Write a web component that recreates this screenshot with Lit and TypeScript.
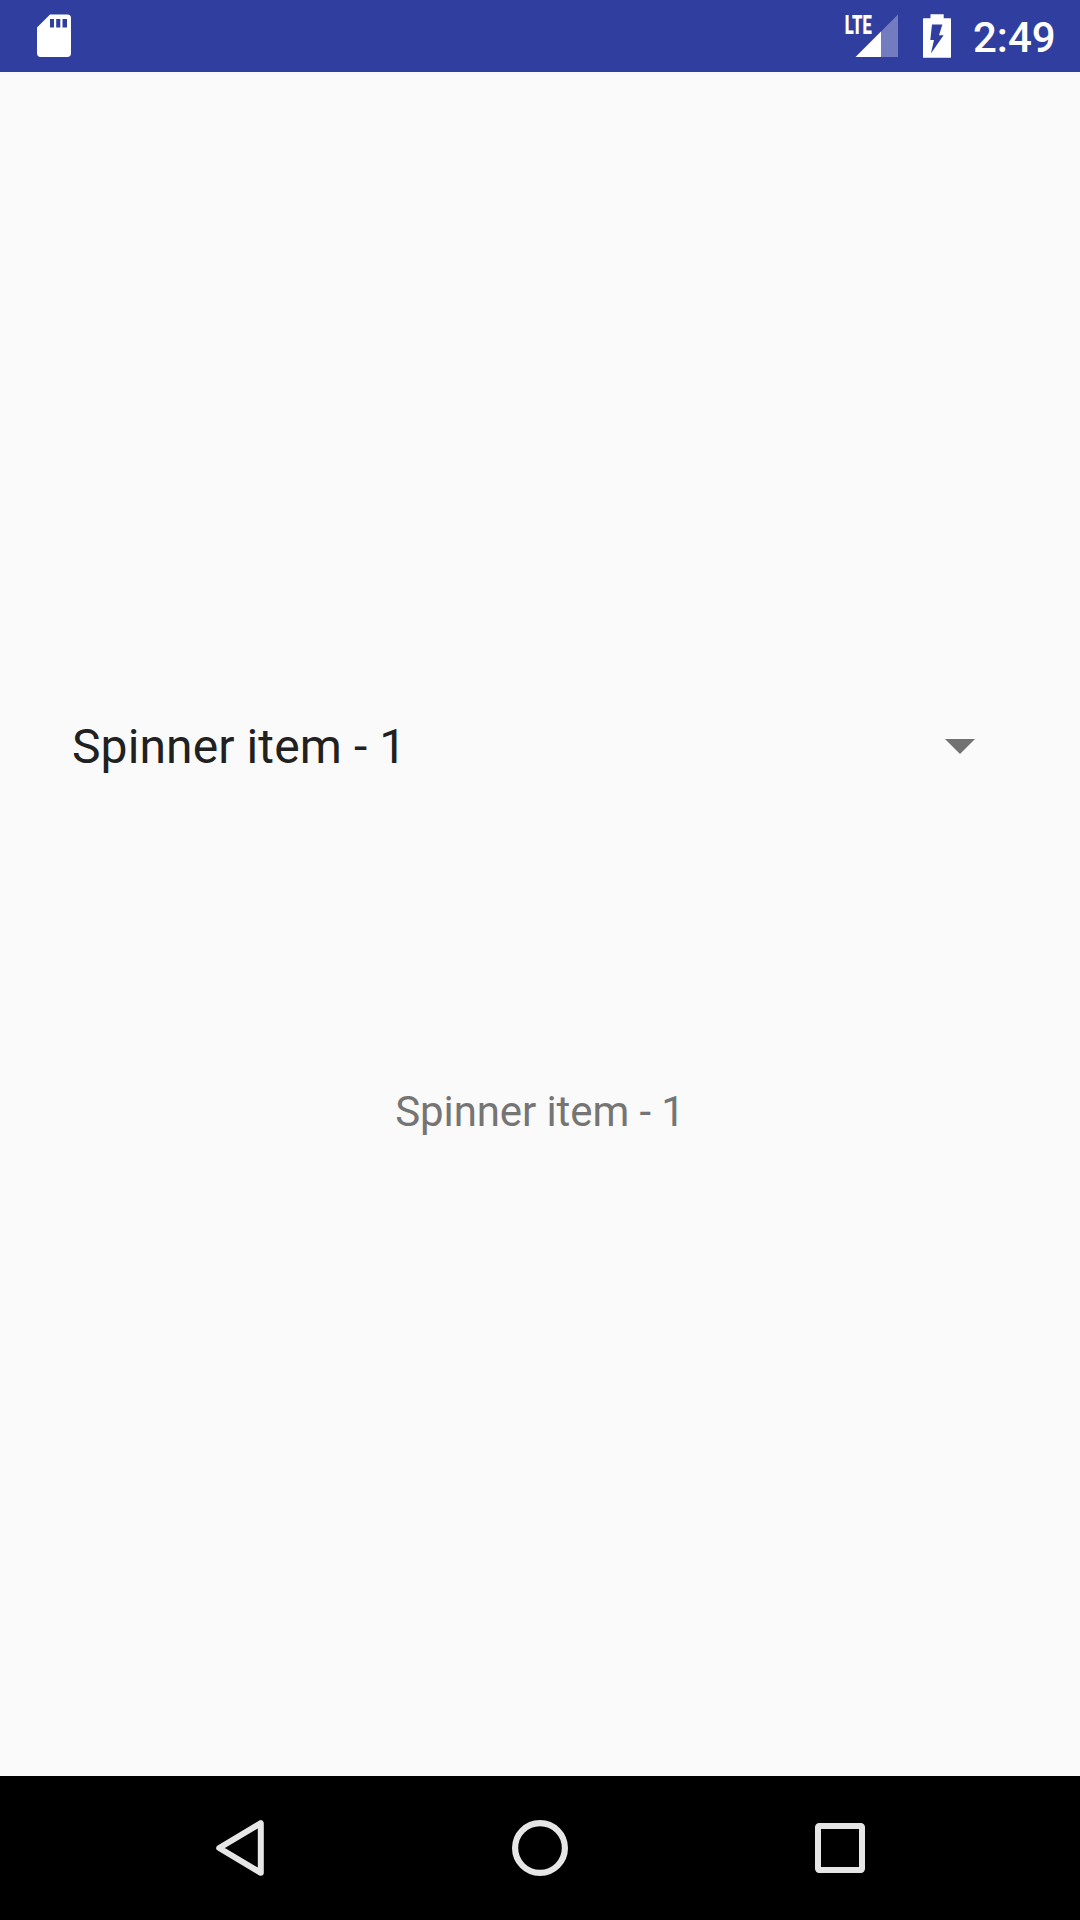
import { LitElement, html, css } from "lit";
import { customElement, state } from "lit/decorators.js";

@customElement("status-bar")
class StatusBar extends LitElement {
  static styles = css`
    :host {
      display: flex;
      align-items: center;
      height: 72px;
      box-sizing: border-box;
      padding: 0 0 0 28px;
      background: #303f9f;
      color: #fff;
      font-family: Roboto, sans-serif;
    }
    svg { display: block; flex: none; }
    .spacer { flex: 1; }
    .lte {
      font-family: Roboto, sans-serif;
      font-weight: 900;
      font-size: 26px;
      fill: #fff;
    }
    .battery { margin-left: 16px; }
    .time {
      margin-left: 19px;
      width: 107px;
      font-size: 42px;
      font-weight: 500;
      line-height: 72px;
      padding-top: 2px;
      height: 72px;
      box-sizing: border-box;
    }
  `;
  render() {
    return html`
      <svg width="52" height="72" viewBox="0 0 52 72" fill="#fff">
        <path fill-rule="evenodd" d="M22 14.6H39.3A3.7 3.7 0 0 1 43 18.3V53.3A3.7 3.7 0 0 1 39.3 57H12.7A3.7 3.7 0 0 1 9 53.3V27.4ZM22 19V27.5H26V19ZM28.2 19V27.5H32.3V19ZM34.5 19V27.5H39V19Z" />
      </svg>
      <div class="spacer"></div>
      <svg width="60" height="72" viewBox="844 0 60 72">
        <path fill="#fff" fill-opacity="0.32" d="M898 14.5V57H881V31.5Z" />
        <path fill="#fff" d="M881 31.5V57H855.5Z" />
        <text class="lte" x="844.8" y="33.6" textLength="27" lengthAdjust="spacingAndGlyphs">LTE</text>
      </svg>
      <svg class="battery" width="34" height="72" viewBox="920 0 34 72">
        <path fill="#fff" d="M930.5 14.3H943.7V18.3H950.4Q951 18.3 951 18.9V57.2Q951 57.8 950.4 57.8H923.6Q923 57.8 923 57.2V18.9Q923 18.3 923.6 18.3H930.5Z" />
        <path fill="#303f9f" d="M932 24.6H942.4L939 35.2H943.6L930.9 53.5L934 40H930.3Z" />
      </svg>
      <div class="time">2:49</div>
    `;
  }
}

@customElement("nav-bar")
class NavBar extends LitElement {
  static styles = css`
    :host {
      display: flex;
      align-items: center;
      justify-content: center;
      gap: 236px;
      height: 144px;
      background: #000;
    }
    svg { display: block; flex: none; fill: none; stroke: #e6e6e6; }
  `;
  render() {
    return html`
      <svg width="64" height="64" viewBox="208 1816 64 64" stroke-width="6" stroke-linejoin="round">
        <path d="M260.8 1823.2V1872.8L219.2 1848Z" />
      </svg>
      <svg width="64" height="64" viewBox="508 1816 64 64" stroke-width="6.2">
        <circle cx="540" cy="1848" r="24.9" />
      </svg>
      <svg width="64" height="64" viewBox="808 1816 64 64" stroke-width="6">
        <rect x="818" y="1826" width="44" height="44" rx="1.2" />
      </svg>
    `;
  }
}

@customElement("app-root")
class AppRoot extends LitElement {
  static styles = css`
    :host {
      display: flex;
      flex-direction: column;
      height: 1920px;
      background: #fafafa;
      font-family: Roboto, sans-serif;
    }
    .content { flex: 1; display: flex; flex-direction: column; }
    .spinner {
      display: flex;
      align-items: center;
      justify-content: space-between;
      height: 72px;
      margin-top: 638px;
      padding: 0 105px 0 72px;
    }
    .selected {
      padding-top: 2px;
      font-size: 48px;
      line-height: 72px;
      letter-spacing: 0.1px;
      color: #212121;
    }
    .arrow { display: block; }
    .label {
      margin-top: 302px;
      font-size: 42px;
      line-height: 56px;
      letter-spacing: -0.1px;
      color: #757575;
      text-align: center;
    }
  `;
  @state() private selected = "Spinner item - 1";
  render() {
    return html`
      <status-bar></status-bar>
      <main class="content">
        <div class="spinner">
          <span class="selected">${this.selected}</span>
          <svg class="arrow" width="30" height="15" viewBox="0 0 30 15"><path fill="#727272" d="M0 0H30L15 15Z" /></svg>
        </div>
        <div class="label">${this.selected}</div>
      </main>
      <nav-bar></nav-bar>
    `;
  }
}
